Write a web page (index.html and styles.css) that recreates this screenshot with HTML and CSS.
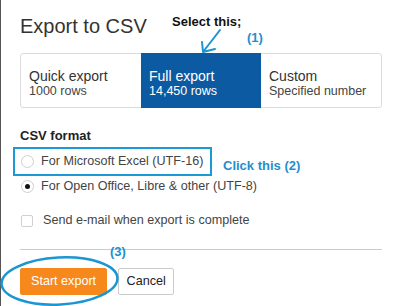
FILE: index.html
```html
<!DOCTYPE html>
<html>
<head>
<meta charset="utf-8">
<link rel="stylesheet" href="styles.css">
</head>
<body>
<div class="page">
  <div class="dialog">
    <h1 class="title">Export to CSV</h1>
    <div class="options">
      <div class="opt">
        <div class="opt-name">Quick export</div>
        <div class="opt-sub">1000 rows</div>
      </div>
      <div class="opt selected">
        <div class="opt-name">Full export</div>
        <div class="opt-sub">14,450 rows</div>
      </div>
      <div class="opt">
        <div class="opt-name">Custom</div>
        <div class="opt-sub">Specified number</div>
      </div>
    </div>
    <div class="section-label">CSV format</div>
    <div class="choice"><span class="radio"></span><span>For Microsoft Excel (UTF-16)</span></div>
    <div class="choice"><span class="radio checked"></span><span>For Open Office, Libre &amp; other (UTF-8)</span></div>
    <div class="check-row"><span class="checkbox"></span><span>Send e-mail when export is complete</span></div>
    <div class="divider"></div>
    <div class="actions">
      <button class="btn primary">Start export</button>
      <button class="btn secondary">Cancel</button>
    </div>
  </div>

  <div class="note note-select">Select this;</div>
  <div class="note note-blue note-1">(1)</div>
  <svg class="arrow" width="32" height="32" viewBox="0 0 32 32">
    <path d="M25 5 L8 27 M7 17 L8 27 L20 24" fill="none" stroke="#1b96d3" stroke-width="2" stroke-linecap="round" stroke-linejoin="round"/>
  </svg>
  <div class="highlight-box"></div>
  <div class="note note-blue note-2">Click this (2)</div>
  <div class="note note-blue note-3">(3)</div>
  <svg class="ring" width="125" height="54" viewBox="0 0 125 54">
    <ellipse cx="59.5" cy="29" rx="58" ry="23.5" transform="rotate(-3 59.5 29)" fill="none" stroke="#1b96d3" stroke-width="2.5"/>
  </svg>
</div>
</body>
</html>
```

FILE: styles.css
```css
html, body {
  margin: 0;
  padding: 0;
  background: #fff;
}
body {
  width: 400px;
  height: 306px;
  overflow: hidden;
  font-family: "Liberation Sans", Arial, sans-serif;
  color: #333;
}
.page {
  position: relative;
  width: 399px;
  height: 306px;
  border-left: 1px solid #555;
}
.dialog {
  padding: 0 18px 0 19px;
  display: flex;
  flex-direction: column;
}
.title {
  margin: 14px 0 0 0;
  font-size: 20px;
  line-height: 24px;
  font-weight: normal;
  color: #333;
}
.options {
  margin-top: 15px;
  display: grid;
  grid-template-columns: 1fr 1fr 1fr;
  border: 1px solid #dcdcdc;
  border-radius: 3px;
  background: #fff;
}
.opt {
  padding: 14px 8px 8px 8px;
}
.opt.selected {
  margin: -1px 0;
  padding-top: 15px;
  padding-bottom: 9px;
  background: #0c5ba2;
  color: #fff;
}
.opt-name {
  font-size: 14px;
  line-height: 16px;
}
.opt-sub {
  font-size: 12.5px;
  line-height: 15px;
}
.opt .opt-name { color: #333; }
.opt .opt-sub { color: #444; }
.opt.selected .opt-name,
.opt.selected .opt-sub { color: #fff; }

.section-label {
  margin-top: 20px;
  font-size: 13px;
  line-height: 16px;
  font-weight: bold;
  color: #222;
}
.choice, .check-row {
  display: flex;
  align-items: center;
  font-size: 12.6px;
  line-height: 15px;
  color: #444;
}
.choice {
  margin-top: 10px;
}
.check-row {
  margin-top: 19px;
}
.radio {
  width: 11px;
  height: 11px;
  border: 1px solid #cfcfcf;
  border-radius: 50%;
  background: #fff;
  margin: 0 7px 0 1px;
  display: flex;
  align-items: center;
  justify-content: center;
}
.radio.checked::after {
  content: "";
  width: 5px;
  height: 5px;
  border-radius: 50%;
  background: #111;
}
.checkbox {
  width: 10px;
  height: 10px;
  border: 1px solid #d0d0d0;
  border-radius: 2px;
  background: #fff;
  margin: 0 10px 0 1px;
}
.divider {
  margin-top: 21px;
  height: 1px;
  background: #cccccc;
}
.actions {
  margin-top: 18px;
  display: flex;
  gap: 11px;
}
.btn {
  height: 27px;
  font-family: "Liberation Sans", Arial, sans-serif;
  font-size: 12.6px;
  line-height: 25px;
  border-radius: 2px;
  cursor: pointer;
}
.btn.primary {
  padding: 0 10px;
  border: 1px solid #f7891c;
  background: #f7891c;
  color: #fff;
}
.btn.secondary {
  padding: 0 7.5px;
  border: 1px solid #cccccc;
  background: #fff;
  color: #222;
}

/* annotations drawn over the dialog */
.note {
  position: absolute;
  font-size: 13px;
  line-height: 15px;
  font-weight: bold;
  white-space: nowrap;
}
.note-select {
  left: 171px;
  top: 14px;
  color: #111;
}
.note-blue {
  color: #1e8fcf;
}
.note-1 {
  left: 246px;
  top: 30px;
}
.note-2 {
  left: 222px;
  top: 158px;
}
.note-3 {
  left: 109px;
  top: 244px;
}
.arrow {
  position: absolute;
  left: 194px;
  top: 25px;
}
.highlight-box {
  position: absolute;
  left: 12px;
  top: 147px;
  width: 199px;
  height: 29px;
  box-sizing: border-box;
  border: 2px solid #1b9ad6;
}
.ring {
  position: absolute;
  left: -1px;
  top: 252px;
}
```
